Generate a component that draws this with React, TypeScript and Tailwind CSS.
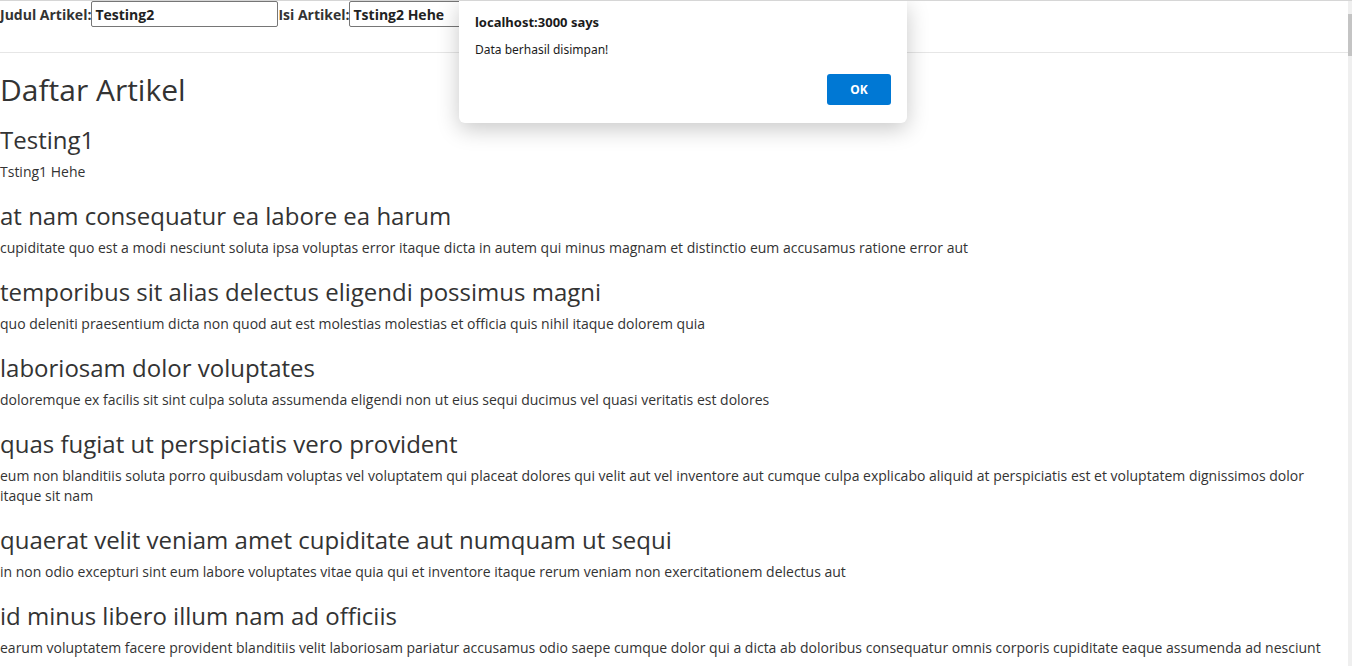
import React from "react";

type Artikel = { judul: string; isi: string };

const artikel: Artikel[] = [
  { judul: "Testing1", isi: "Tsting1 Hehe" },
  {
    judul: "at nam consequatur ea labore ea harum",
    isi: "cupiditate quo est a modi nesciunt soluta ipsa voluptas error itaque dicta in autem qui minus magnam et distinctio eum accusamus ratione error aut",
  },
  {
    judul: "temporibus sit alias delectus eligendi possimus magni",
    isi: "quo deleniti praesentium dicta non quod aut est molestias molestias et officia quis nihil itaque dolorem quia",
  },
  {
    judul: "laboriosam dolor voluptates",
    isi: "doloremque ex facilis sit sint culpa soluta assumenda eligendi non ut eius sequi ducimus vel quasi veritatis est dolores",
  },
  {
    judul: "quas fugiat ut perspiciatis vero provident",
    isi: "eum non blanditiis soluta porro quibusdam voluptas vel voluptatem qui placeat dolores qui velit aut vel inventore aut cumque culpa explicabo aliquid at perspiciatis est et voluptatem dignissimos dolor itaque sit nam",
  },
  {
    judul: "quaerat velit veniam amet cupiditate aut numquam ut sequi",
    isi: "in non odio excepturi sint eum labore voluptates vitae quia qui et inventore itaque rerum veniam non exercitationem delectus aut",
  },
  {
    judul: "id minus libero illum nam ad officiis",
    isi: "earum voluptatem facere provident blanditiis velit laboriosam pariatur accusamus odio saepe cumque dolor qui a dicta ab doloribus consequatur omnis corporis cupiditate eaque assumenda ad nesciunt",
  },
];

function AlertBox() {
  return (
    <div className="absolute left-[459px] top-0 w-[448px] h-[122px] bg-white rounded-b-md shadow-[0_6px_22px_rgba(0,0,0,0.22)] px-4 pt-[12px] font-['Noto_Sans',sans-serif] text-[#1b1b1b]">
      <div className="text-[13px] font-bold leading-[18px]">localhost:3000 says</div>
      <div className="text-[12px] leading-[18px] mt-[10px]">Data berhasil disimpan!</div>
      <div className="flex justify-end mt-[15px]">
        <button className="w-16 h-[31px] bg-[#0078d4] text-white text-[12px] font-bold rounded-[3px]">
          OK
        </button>
      </div>
    </div>
  );
}

export default function App() {
  return (
    <div className="relative h-[666px] overflow-hidden bg-white border-t border-[#d6d6d6] flex font-['Open_Sans',sans-serif] text-[#333333]">
      <div className="flex-1 min-w-0">
        <form className="flex items-center h-[26px] text-[14px] font-bold">
          <label>Judul Artikel:</label>
          <input
            defaultValue="Testing2"
            className="w-[187px] h-[26px] border border-[#767676] rounded-[2px] px-[3px] font-bold text-[#222] outline-none"
          />
          <label>Isi Artikel:</label>
          <input
            defaultValue="Tsting2 Hehe"
            className="w-[187px] h-[26px] border border-[#767676] rounded-[2px] px-[3px] font-bold text-[#222] outline-none"
          />
        </form>
        <hr className="mt-[25px] border-[#e6e6e6]" />
        <h1 className="text-[30px] leading-[40px] mt-[17px] mb-[14px]">Daftar Artikel</h1>
        {artikel.map((a) => (
          <div key={a.judul} className="mb-[18px]">
            <h2 className="text-[24px] leading-[32px] mb-[6px]">{a.judul}</h2>
            <p className="text-[14px] leading-[20px]">{a.isi}</p>
          </div>
        ))}
      </div>
      <div className="w-[4px] shrink-0 bg-[#efefef] pt-[13px]">
        <div className="h-[42px] bg-[#c4c4c4]" />
      </div>
      <AlertBox />
    </div>
  );
}
